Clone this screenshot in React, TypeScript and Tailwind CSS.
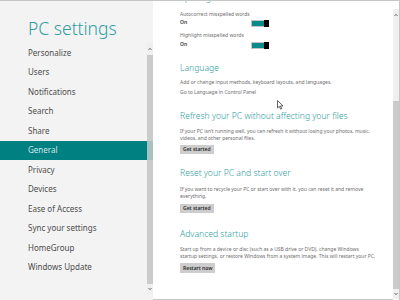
import React from 'react';

const font = { fontFamily: '"Noto Sans", "Open Sans", sans-serif' };

const navItems = [
  'Personalize',
  'Users',
  'Notifications',
  'Search',
  'Share',
  'General',
  'Privacy',
  'Devices',
  'Ease of Access',
  'Sync your settings',
  'HomeGroup',
  'Windows Update',
];

const Toggle: React.FC = () => (
  <div className="relative w-[18px] h-[7px] border border-[#c4c4c4] bg-[#0b8a8a]">
    <div className="absolute right-[-1px] top-[-1px] w-[5px] h-[7px] bg-black" />
  </div>
);

const Heading: React.FC<{ children: React.ReactNode; className?: string }> = ({ children, className }) => (
  <div className={`text-[8.6px] leading-[12px] text-[#2f9ea3] font-light whitespace-nowrap ${className ?? ''}`}>
    {children}
  </div>
);

const Body: React.FC<{ children: React.ReactNode; className?: string }> = ({ children, className }) => (
  <div className={`text-[5px] leading-[7px] text-[#6e6e6e] whitespace-nowrap ${className ?? ''}`}>{children}</div>
);

const Button: React.FC<{ children: React.ReactNode; className?: string }> = ({ children, className }) => (
  <div className={`self-start h-[9px] px-[3px] bg-[#cdcdcd] text-[5px] leading-[9px] font-semibold text-[#2b2b2b] ${className ?? ''}`}>
    {children}
  </div>
);

const ScrollArrow: React.FC<{ up?: boolean }> = ({ up }) => (
  <svg width="6" height="6" viewBox="0 0 6 6">
    <path d={up ? 'M1.5 4 L3 2.3 L4.5 4' : 'M1.5 2 L3 3.7 L4.5 2'} fill="none" stroke="#606060" strokeWidth="0.9" />
  </svg>
);

export default function App() {
  return (
    <div className="w-[400px] h-[300px] flex overflow-hidden border-t border-[#c6c6c6] bg-white" style={font}>
      {/* sidebar */}
      <div className="w-[147px] h-full bg-[#f3f3f3] flex flex-col">
        <div className="pl-[28px] pt-[16px] h-[42px] text-[17.5px] leading-[22px] font-light text-[#2f9ea3]">
          PC settings
        </div>
        <div className="flex flex-col">
          {navItems.map((item) => (
            <div
              key={item}
              className={`h-[19.5px] pl-[28px] flex items-center text-[8px] ${
                item === 'General' ? 'bg-[#008080] text-[#cfe8e8]' : 'text-[#4d4d4d]'
              }`}
            >
              {item}
            </div>
          ))}
        </div>
      </div>

      {/* sidebar scrollbar */}
      <div className="w-[6px] h-full bg-[#f3f3f3] flex flex-col">
        <div className="h-[42px]" />
        <div className="h-[12px] bg-[#efefef] flex items-center justify-center">
          <ScrollArrow up />
        </div>
        <div className="h-[86px] bg-[#cbcbcb]" />
        <div className="h-[19px] bg-[#a7c2c2]" />
        <div className="h-[124px] bg-[#cbcbcb]" />
        <div className="h-[10px] bg-[#efefef] flex items-center justify-center">
          <ScrollArrow />
        </div>
      </div>

      {/* content */}
      <div className="relative flex-1 h-full overflow-hidden border-b border-[#c6c6c6] pl-[27px] flex flex-col">
        <Heading className="mt-[-9px]">Spelling</Heading>
        <Body className="mt-[6px] leading-[8px]">Autocorrect misspelled words</Body>
        <div className="mt-[1px] flex items-center h-[8px]">
          <div className="w-[71px] text-[5px] font-semibold text-[#333]">On</div>
          <Toggle />
        </div>
        <Body className="mt-[4px] leading-[8px]">Highlight misspelled words</Body>
        <div className="mt-[2px] flex items-center h-[8px]">
          <div className="w-[71px] text-[5px] font-semibold text-[#333]">On</div>
          <Toggle />
        </div>

        <Heading className="mt-[13px]">Language</Heading>
        <Body className="mt-[5px]">Add or change input methods, keyboard layouts, and languages.</Body>
        <Body className="mt-[3px] text-[#2f9ea3]">Go to Language in Control Panel</Body>

        <Heading className="mt-[14px]">Refresh your PC without affecting your files</Heading>
        <Body className="mt-[6px]">
          If your PC isn’t running well, you can refresh it without losing your photos, music,
          <br />
          videos, and other personal files.
        </Body>
        <Button className="mt-[3px]">Get started</Button>

        <Heading className="mt-[13px]">Reset your PC and start over</Heading>
        <Body className="mt-[7px]">
          If you want to recycle your PC or start over with it, you can reset it and remove
          <br />
          everything.
        </Body>
        <Button className="mt-[4px]">Get started</Button>

        <Heading className="mt-[15px]">Advanced startup</Heading>
        <Body className="mt-[6px]">
          Start up from a device or disc (such as a USB drive or DVD), change Windows
          <br />
          startup settings, or restore Windows from a system image. This will restart your PC.
        </Body>
        <Button className="mt-[3px] h-[10px] leading-[10px]">Restart now</Button>

        {/* mouse pointer */}
        <svg className="absolute left-[124px] top-[99px]" width="7" height="10" viewBox="0 0 7 10">
          <path d="M0.5 0.5 L0.5 8 L2.3 6.3 L3.6 9.2 L4.7 8.7 L3.5 5.9 L6 5.9 Z" fill="white" stroke="#222" strokeWidth="0.7" strokeLinejoin="round" />
        </svg>
      </div>

      {/* content scrollbar */}
      <div className="w-[7px] h-full bg-white flex flex-col border-r border-[#c6c6c6]">
        <div className="h-[8px]" />
        <div className="h-[12px] bg-[#efefef] flex items-center justify-center">
          <ScrollArrow up />
        </div>
        <div className="h-[80px] bg-[#efefef]" />
        <div className="h-[188px] bg-[#cbcbcb]" />
        <div className="h-[10px] bg-[#efefef] flex items-center justify-center">
          <ScrollArrow />
        </div>
      </div>
    </div>
  );
}
